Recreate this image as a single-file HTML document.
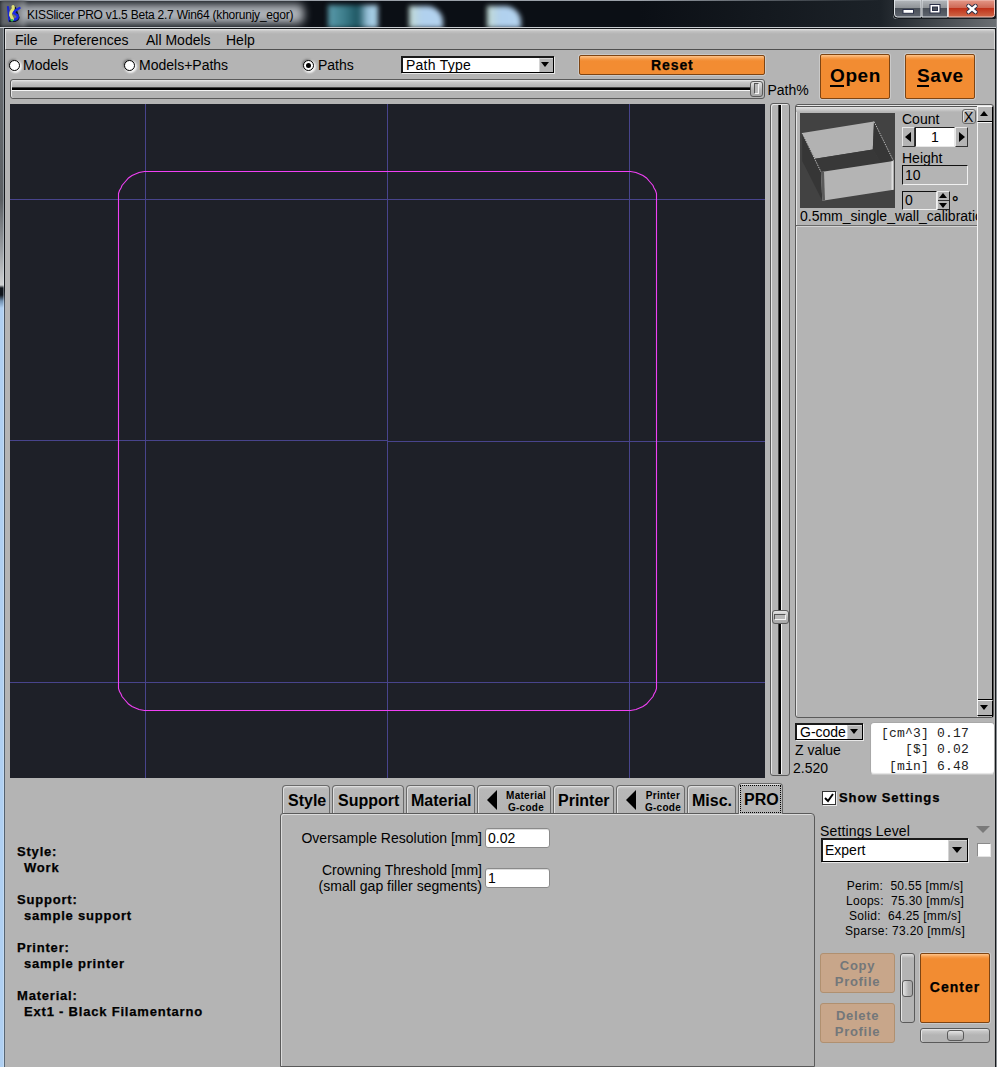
<!DOCTYPE html>
<html><head><meta charset="utf-8">
<style>
*{margin:0;padding:0;box-sizing:border-box}
html,body{width:997px;height:1067px;overflow:hidden;background:#b4b4b4;font-family:"Liberation Sans",sans-serif;color:#000}
.a{position:absolute}
.t{position:absolute;white-space:pre;line-height:1;font-size:14px}
.b{font-weight:bold}
.orange{position:absolute;background:linear-gradient(#ffc48a 0,#f59a48 3px,#f28c32 5px,#f28c32 100%);border:1px solid #7e4412;border-radius:2px;box-shadow:0 0 0 1px rgba(215,215,215,.6)}
.sld{position:absolute;border:1px solid #5a5a5a;border-radius:3px;background:linear-gradient(#e8e8e8 0,#c8c8c8 2px,#b4b4b4 6px,#b4b4b4 100%);box-shadow:inset 1px 0 0 #e6e6e6}
.dd{position:absolute;background:#fff;border:1px solid #000;border-width:2px 1px 1px 2px;border-color:#1a1a1a #000 #000 #1a1a1a;box-shadow:1px 1px 0 #e8e8e8}
.ddb{position:absolute;top:0;bottom:0;right:0;background:#b4b4b4;border-top:1px solid #d8d8d8;border-left:1px solid #d8d8d8}
.tri{position:absolute;width:0;height:0;border-left:5px solid transparent;border-right:5px solid transparent;border-top:5px solid #000}
.radio{position:absolute;width:11px;height:11px;border-radius:50%;background:#fff;border:1.5px solid #000;box-shadow:-1px -1px 2px rgba(40,40,40,.45),1px 1px 2px 1px rgba(255,255,255,.9)}
.tab{position:absolute;top:785px;height:28px;border:1px solid #6a6a6a;border-bottom:none;border-radius:4px 4px 0 0;background:linear-gradient(#d0d0d0 0,#b8b8b8 3px,#b4b4b4 100%);box-shadow:inset 1px 1px 0 #dedede}
</style></head>
<body>
<!-- TITLE BAR -->
<div class="a" style="left:0;top:0;width:997px;height:28px;background:#0b0f15"></div>
<div class="a" style="left:0;top:0;width:997px;height:1px;background:#9aa0a8"></div>
<div class="a" style="left:0;top:0;width:26px;height:27px;background:#62666a;filter:blur(2px)"></div>
<div class="a" style="left:20px;top:4px;width:284px;height:20px;background:rgba(200,205,210,.85);filter:blur(4px);border-radius:6px"></div>
<div class="a" style="left:328px;top:5px;width:50px;height:23px;background:linear-gradient(90deg,#5c9cac,#3a7a88 35%,#1c5460 60%,#9ec6de 80%,#a8d0e8);filter:blur(2.5px)"></div>
<div class="a" style="left:409px;top:6px;width:34px;height:22px;background:linear-gradient(90deg,#c4dcd4,#b0d0ee 40%,#b4d4f0);filter:blur(2.5px);border-radius:0 16px 0 0"></div>
<div class="a" style="left:487px;top:6px;width:34px;height:22px;background:linear-gradient(90deg,#c4dcd4,#b0d0ee 40%,#b4d4f0);filter:blur(2.5px);border-radius:0 16px 0 0"></div>
<div class="a" style="left:640px;top:0;width:240px;height:28px;background:linear-gradient(90deg,rgba(11,15,21,0),rgba(28,34,40,1))"></div>
<div class="t" style="left:27px;top:8.5px;font-size:12px;letter-spacing:-0.23px;color:#000">KISSlicer PRO v1.5 Beta 2.7 Win64 (khorunjy_egor)</div>
<!-- app icon -->
<svg class="a" style="left:0;top:0;filter:blur(.35px)" width="26" height="26" viewBox="0 0 26 26">
<path d="M8 7 L9.5 21" stroke="#1a26d0" stroke-width="2.2" fill="none" stroke-linecap="round"/>
<path d="M15 8 L18.5 17.5 Q18 20 15 21 L10 21" stroke="#05101a" stroke-width="2.2" fill="none" stroke-linecap="round" opacity=".9"/>
<path d="M19.5 8 Q16 10 13 12.5 L17.5 15.5 Q18.5 18.5 15 19.5 L12 20" stroke="#1e2ae6" stroke-width="2.4" fill="none" stroke-linecap="round"/>
<path d="M13 6.5 Q14 8.5 12 10.5 Q10 13 10.5 15 Q11.5 17 12.5 19" stroke="#e2e274" stroke-width="3" fill="none" stroke-linecap="round"/>
<circle cx="12" cy="20.2" r="1.3" fill="#38c048"/>
</svg>

<!-- caption buttons -->
<svg class="a" style="left:880px;top:0" width="117" height="28" viewBox="0 0 117 28">
<defs>
<linearGradient id="gmin" x1="0" y1="0" x2="0" y2="1">
<stop offset="0" stop-color="#b4b8bc"/><stop offset=".5" stop-color="#8c9094"/><stop offset=".5" stop-color="#4a5058"/><stop offset="1" stop-color="#5e646e"/></linearGradient>
<linearGradient id="gcl" x1="0" y1="0" x2="0" y2="1">
<stop offset="0" stop-color="#e49888"/><stop offset=".5" stop-color="#cc6450"/><stop offset=".5" stop-color="#c0321a"/><stop offset="1" stop-color="#d06848"/></linearGradient>
<linearGradient id="gtb" x1="0" y1="0" x2="1" y2="0">
<stop offset="0" stop-color="#1c2228"/><stop offset="1" stop-color="#6c7074"/></linearGradient>
</defs>
<rect x="0" y="0" width="117" height="28" fill="url(#gtb)"/>
<path d="M13 0 V15 Q13 19 17 19 H116 V0 Z" fill="#e8ecf0" opacity=".85"/>
<path d="M13.5 0 V14.5 Q13.5 18.5 17.5 18.5 H115.5 V0" fill="#15191d" stroke="#15191d"/>
<path d="M14.5 0 V14 Q14.5 17 17.5 17 H41 V0 Z" fill="url(#gmin)" stroke="#e0e4e8" stroke-width="1"/>
<path d="M42 0 V17 H67.5 V0 Z" fill="url(#gmin)" stroke="#e0e4e8" stroke-width="1"/>
<path d="M68.5 0 V17 H112 Q114.5 17 114.5 14.5 V0 Z" fill="url(#gcl)" stroke="#f2c8c0" stroke-width="1"/>
<rect x="23" y="9.5" width="10.5" height="3.8" fill="#fff" stroke="#2a3048" stroke-width="1"/>
<rect x="50" y="4.5" width="10" height="8.5" fill="#fff" stroke="#2a3048" stroke-width="1"/>
<rect x="52.5" y="7" width="5" height="3.5" fill="#4a5058" stroke="#2a3048" stroke-width="1"/>
<path d="M88.5 6 L95.5 12 M95.5 6 L88.5 12" stroke="#2a3048" stroke-width="4.4" stroke-linecap="round"/>
<path d="M88.5 6 L95.5 12 M95.5 6 L88.5 12" stroke="#fff" stroke-width="2.4" stroke-linecap="square"/>
</svg>

<!-- window frame -->
<div class="a" style="left:0;top:28px;width:4px;height:1039px;background:linear-gradient(#6a6e72 0,#5c6064 172px,#9a9ea2 222px,#cfd1d2 257px,#10151b 260px,#10151b 267px,#7090b0 273px,#b0d0f2 280px,#b0d0f2 100%)"></div>
<div class="a" style="left:3px;top:27px;width:1px;height:1040px;background:rgba(230,240,250,.35)"></div>
<div class="a" style="left:0;top:27px;width:997px;height:1px;background:#c8ccd0"></div>
<div class="a" style="left:4px;top:28px;width:992px;height:1px;background:#15181b"></div>
<div class="a" style="left:4px;top:28px;width:1px;height:1039px;background:linear-gradient(#15181c 0,#15181c 262px,#4a5664 275px,#5a6876 100%)"></div>
<div class="a" style="left:995px;top:28px;width:1px;height:1039px;background:#15181b"></div>
<div class="a" style="left:996px;top:19px;width:1px;height:1048px;background:#8a8e92"></div>

<!-- MENU BAR -->
<div class="a" style="left:5px;top:29px;width:990px;height:21px;background:linear-gradient(#e6e6e6 0,#c4c4c4 2px,#b4b4b4 5px,#b4b4b4 100%);border-bottom:1px solid #505050;border-left:1px solid #e0e0e0;border-right:1px solid #d8d8d8;border-radius:0 2px 0 0"></div>
<div class="t" style="left:15px;top:32.5px">File</div>
<div class="t" style="left:53px;top:32.5px">Preferences</div>
<div class="t" style="left:146px;top:32.5px">All Models</div>
<div class="t" style="left:226px;top:32.5px">Help</div>


<!-- RADIO ROW -->
<div class="radio" style="left:9px;top:60px"></div>
<div class="t" style="left:23px;top:58px">Models</div>
<div class="radio" style="left:124px;top:60px"></div>
<div class="t" style="left:139px;top:58px">Models+Paths</div>
<div class="radio" style="left:303px;top:60px"></div>
<div class="a" style="left:306px;top:63px;width:5px;height:5px;border-radius:50%;background:#000"></div>
<div class="t" style="left:318px;top:58px">Paths</div>
<!-- Path Type dropdown -->
<div class="dd" style="left:401px;top:56px;width:153px;height:17px"></div>
<div class="a" style="left:539px;top:58px;width:14px;height:14px;background:#b4b4b4;border-top:1px solid #d4d4d4;border-left:1px solid #d4d4d4"></div>
<div class="tri" style="left:541px;top:62px;border-width:5px 4.5px 0 4.5px"></div>
<div class="t" style="left:406px;top:58px;font-size:14px;letter-spacing:.25px">Path Type</div>
<!-- Reset -->
<div class="orange" style="left:579px;top:55px;width:186px;height:20px"></div>
<div class="t b" style="left:651px;top:58px;font-size:14px;letter-spacing:.9px;-webkit-text-stroke:.25px #000">Reset</div>
<!-- Open / Save -->
<div class="orange" style="left:820px;top:54px;width:70px;height:45px"></div>
<div class="t b" style="left:830px;top:66px;font-size:19px;letter-spacing:.6px">Open</div>
<div class="a" style="left:830px;top:85px;width:14px;height:2px;background:#000"></div>
<div class="orange" style="left:905px;top:54px;width:70px;height:45px"></div>
<div class="t b" style="left:917px;top:66px;font-size:19px;letter-spacing:.6px">Save</div>
<div class="a" style="left:917px;top:85px;width:12px;height:2px;background:#000"></div>
<!-- horizontal path slider -->
<div class="sld" style="left:10px;top:79px;width:755px;height:20px"></div>
<div class="a" style="left:12px;top:87px;width:740px;height:3px;background:#000;border-top:1px solid #444"></div>
<div class="a" style="left:12px;top:90px;width:740px;height:1px;background:#f4f4f4"></div>
<div class="a" style="left:750px;top:81px;width:13px;height:16px;border:1px solid #5a5a5a;border-radius:3px;background:linear-gradient(#e4e4e4,#b4b4b4 60%,#a8a8a8)"></div>
<div class="a" style="left:754px;top:83px;width:5px;height:11px;border:1px solid #555;border-right-color:#f4f4f4;border-bottom-color:#f4f4f4;background:#b8b8b8"></div>
<div class="t" style="left:767.5px;top:83px">Path%</div>


<!-- VIEWPORT -->
<svg class="a" style="left:10px;top:104px" width="755" height="674" viewBox="0 0 755 674">
<rect width="755" height="674" fill="#1e2028"/>
<g stroke="#48448c" stroke-width="1" shape-rendering="crispEdges">
<line x1="135.5" y1="0" x2="135.5" y2="674"/>
<line x1="377.5" y1="0" x2="377.5" y2="674"/>
<line x1="619.5" y1="0" x2="619.5" y2="674"/>
<line x1="0" y1="95.5" x2="755" y2="95.5"/>
<line x1="0" y1="336.5" x2="377" y2="336.5"/>
<line x1="377" y1="337.5" x2="755" y2="337.5"/>
<line x1="0" y1="578.5" x2="755" y2="578.5"/>
</g>
<path d="M108.5 89.5 L109.5 86.5 L111 84 L112 81.5 L115 78 L118.5 74 L122 71.5 L125.5 70 L129 68.5 L134.5 67.5 L620.5 67.5 L626 68.5 L629.5 70 L633 71.5 L636.5 74 L640 78 L643 81.5 L644 84 L645.5 86.5 L646.5 89.5 L646.5 584.5 L645.5 587.5 L644 590 L643 592.5 L640 596 L636.5 600 L633 602.5 L629.5 604 L626 605.5 L620.5 606.5 L134.5 606.5 L129 605.5 L125.5 604 L122 602.5 L118.5 600 L115 596 L112 592.5 L111 590 L109.5 587.5 L108.5 584.5 Z" fill="none" stroke="#f040f4" stroke-width="1.1"/>
</svg>
<!-- vertical slider -->
<div class="a" style="left:770px;top:103px;width:20px;height:673px;border:1px solid #5a5a5a;border-radius:3px;background:#b4b4b4;box-shadow:inset 1px 1px 0 #e6e6e6"></div>
<div class="a" style="left:778px;top:105px;width:3px;height:669px;background:#000;border-left:1px solid #444"></div>
<div class="a" style="left:781px;top:105px;width:1px;height:669px;background:#f4f4f4"></div>
<div class="a" style="left:772px;top:610px;width:17px;height:14px;border:1px solid #5a5a5a;border-radius:3px;background:linear-gradient(#e4e4e4,#b4b4b4 60%,#a8a8a8)"></div>
<div class="a" style="left:774px;top:614px;width:12px;height:6px;border:1px solid #555;border-right-color:#f4f4f4;border-bottom-color:#f4f4f4;background:#b8b8b8"></div>

<!-- RIGHT PANEL -->
<div class="a" style="left:795px;top:104px;width:199px;height:614px;border:1px solid #5a5a5a;border-radius:3px;background:#b4b4b4;box-shadow:inset 1px 1px 0 #e6e6e6"></div>
<div class="a" style="left:796px;top:106px;width:181px;height:1px;background:#555"></div>
<div class="a" style="left:796px;top:107px;width:181px;height:5px;background:linear-gradient(#e4e4e4,#b4b4b4)"></div>
<div class="a" style="left:796px;top:225px;width:181px;height:1px;background:#6a6a6a"></div>
<div class="a" style="left:796px;top:226px;width:181px;height:1px;background:#d4d4d4"></div>
<!-- thumbnail -->
<svg class="a" style="left:800px;top:113px" width="95" height="95" viewBox="0 0 95 95">
<rect width="95" height="95" fill="#424242"/>
<polygon points="2.2,20.1 21,59 22.3,87.7 2.2,48" fill="#363636"/>
<polygon points="2.2,20.1 74,8.5 72.8,36.5 15,45.7" fill="#b2b2b2"/>
<polygon points="74,8.5 93.5,48 81.5,50.5 72.8,36.5" fill="#363636"/>
<polygon points="15,45.7 72.8,36.5 81.5,50.5 21,59" fill="#383838"/>
<polygon points="21,59 93.5,48 93.5,76.7 22.3,87.7" fill="#b4b4b4"/>
<polygon points="21,59 24,59 25,87.3 22.3,87.7" fill="#5a5a5a"/>
<line x1="74" y1="8.5" x2="93.5" y2="48" stroke="#d8d8d8" stroke-width=".8" stroke-dasharray="1.5 1"/>
<line x1="2.2" y1="20.1" x2="21" y2="59" stroke="#d8d8d8" stroke-width=".8" stroke-dasharray="1.5 1"/>
<polygon points="91.5,48.3 93.5,48 93.5,76.7 91.5,77" fill="#e0e0e0"/>
</svg>
<div class="t" style="left:800px;top:207px;width:177px;height:18px;line-height:18px;overflow:hidden;font-size:14px">0.5mm_single_wall_calibration</div>
<div class="t" style="left:902px;top:112px;font-size:14px">Count</div>
<div class="a" style="left:962px;top:109px;width:14px;height:15px;border:1px solid #6a6a6a;border-radius:3px;background:#b4b4b4;box-shadow:inset 1px 1px 0 #e0e0e0"></div>
<div class="t" style="left:964px;top:110px;font-size:14px">X</div>
<!-- count spinner -->
<div class="a" style="left:902px;top:127px;width:13px;height:20px;background:#b4b4b4;border:1px solid;border-color:#e8e8e8 #333 #333 #e8e8e8"></div>
<div class="a" style="left:905px;top:132px;width:0;height:0;border-top:5px solid transparent;border-bottom:5px solid transparent;border-right:6px solid #000"></div>
<div class="a" style="left:915px;top:127px;width:40px;height:20px;background:#fff;border:1px solid;border-color:#222 #e8e8e8 #e8e8e8 #222"></div>
<div class="t" style="left:931px;top:130px;font-size:14px">1</div>
<div class="a" style="left:955px;top:127px;width:13px;height:20px;background:#b4b4b4;border:1px solid;border-color:#e8e8e8 #333 #333 #e8e8e8"></div>
<div class="a" style="left:959px;top:132px;width:0;height:0;border-top:5px solid transparent;border-bottom:5px solid transparent;border-left:6px solid #000"></div>
<div class="t" style="left:902px;top:151px;font-size:14px">Height</div>
<div class="a" style="left:902px;top:165px;width:66px;height:20px;background:#b4b4b4;border:1px solid;border-color:#111 #f0f0f0 #f0f0f0 #111"></div>
<div class="t" style="left:905px;top:168px;font-size:14px">10</div>
<div class="a" style="left:902px;top:191px;width:35px;height:19px;background:#b4b4b4;border:1px solid;border-color:#111 #f0f0f0 #f0f0f0 #111"></div>
<div class="t" style="left:905px;top:193px;font-size:14px">0</div>
<div class="a" style="left:937px;top:191px;width:13px;height:19px;background:#b4b4b4;border:1px solid;border-color:#e8e8e8 #222 #222 #e8e8e8"></div>
<div class="a" style="left:938px;top:200px;width:11px;height:1px;background:#333"></div>
<div class="a" style="left:939px;top:193px;width:0;height:0;border-left:4.5px solid transparent;border-right:4.5px solid transparent;border-bottom:5px solid #000"></div>
<div class="a" style="left:939px;top:203px;width:0;height:0;border-left:4.5px solid transparent;border-right:4.5px solid transparent;border-top:5px solid #000"></div>
<div class="t b" style="left:952px;top:195px;font-size:16px">&#176;</div>
<!-- scrollbar -->
<div class="a" style="left:977px;top:106px;width:16px;height:611px;background:#b4b4b4;border-left:1px solid #f4f4f4;border-right:1px solid #000"></div>
<div class="a" style="left:977px;top:106px;width:16px;height:16px;background:#b4b4b4;border:1px solid;border-color:#f8f8f8 #000 #000 #f8f8f8"></div>
<div class="a" style="left:980px;top:111px;width:0;height:0;border-left:4.5px solid transparent;border-right:4.5px solid transparent;border-bottom:5px solid #000"></div>
<div class="a" style="left:978px;top:122px;width:14px;height:1px;background:#f4f4f4"></div>
<div class="a" style="left:978px;top:699px;width:14px;height:1px;background:#000"></div>
<div class="a" style="left:977px;top:700px;width:16px;height:16px;background:#b4b4b4;border:1px solid;border-color:#f8f8f8 #000 #000 #f8f8f8"></div>
<div class="a" style="left:980px;top:705px;width:0;height:0;border-left:4.5px solid transparent;border-right:4.5px solid transparent;border-top:5px solid #000"></div>

<!-- G-code dropdown etc -->
<div class="dd" style="left:795px;top:723px;width:68px;height:17px"></div>
<div class="a" style="left:847px;top:725px;width:15px;height:14px;background:#b4b4b4;border-top:1px solid #d4d4d4;border-left:1px solid #d4d4d4"></div>
<div class="tri" style="left:850px;top:729px;border-width:5px 4.5px 0 4.5px"></div>
<div class="t" style="left:800px;top:725px;font-size:14px;width:48px;overflow:hidden">G-code</div>
<div class="t" style="left:795px;top:743px;font-size:14px">Z value</div>
<div class="t" style="left:793px;top:761px;font-size:14px">2.520</div>
<div class="a" style="left:870px;top:722px;width:125px;height:53px;background:#fff;border:1px solid #a8a8a8;border-bottom-color:#c8c8c8;border-radius:4px;box-shadow:inset 0 -1px 1px #e4e4e4"></div>
<div class="t" style="left:867px;top:725.5px;width:102px;text-align:right;font-family:'Liberation Mono',monospace;font-size:13px;line-height:16.5px;letter-spacing:.2px;color:#222">[cm^3] 0.17
[$] 0.02
[min] 6.48</div>


<!-- TABS -->
<div class="a" style="left:280px;top:813px;width:535px;height:254px;border:1px solid #5a5a5a;border-right-color:#5a5a5a;border-radius:3px 4px 0 0;background:#b4b4b4;box-shadow:inset 1px 1px 0 #dcdcdc"></div>
<div class="tab" style="left:282px;width:48px"></div>
<div class="t b" style="left:288px;top:793px;font-size:16px">Style</div>
<div class="tab" style="left:332px;width:72px"></div>
<div class="t b" style="left:338px;top:793px;font-size:16px">Support</div>
<div class="tab" style="left:406px;width:69px"></div>
<div class="t b" style="left:411px;top:793px;font-size:16px">Material</div>
<div class="tab" style="left:477px;width:74px"></div>
<div class="a" style="left:487px;top:790px;width:0;height:0;border-top:10px solid transparent;border-bottom:10px solid transparent;border-right:10px solid #000"></div>
<div class="t b" style="left:506px;top:790.3px;font-size:10px;line-height:12px;letter-spacing:.3px;text-align:center;width:40px">Material
G-code</div>
<div class="tab" style="left:553px;width:61px"></div>
<div class="t b" style="left:558px;top:793px;font-size:16px">Printer</div>
<div class="tab" style="left:616px;width:69px"></div>
<div class="a" style="left:626px;top:790px;width:0;height:0;border-top:10px solid transparent;border-bottom:10px solid transparent;border-right:10px solid #000"></div>
<div class="t b" style="left:643px;top:790.3px;font-size:10px;line-height:12px;letter-spacing:.3px;text-align:center;width:40px">Printer
G-code</div>
<div class="tab" style="left:687px;width:49px"></div>
<div class="t b" style="left:692px;top:793px;font-size:16px">Misc.</div>
<div class="tab" style="left:738px;top:783px;width:45px;height:31px;background:#b4b4b4;box-shadow:inset 1px 1px 0 #dedede"></div>
<div class="a" style="left:740px;top:785px;width:41px;height:28px;border:1px dotted #000"></div>
<div class="t b" style="left:744px;top:792px;font-size:16px">PRO</div>

<!-- PRO content -->
<div class="t" style="left:301px;top:831px;width:181px;text-align:right;font-size:14px">Oversample Resolution [mm]</div>
<div class="a" style="left:485px;top:828px;width:65px;height:20px;background:#fff;border:1px solid #8a8a8a;border-radius:3px;box-shadow:inset 0 1px 0 #ddd"></div>
<div class="t" style="left:488px;top:831px;font-size:14px">0.02</div>
<div class="t" style="left:200px;top:863px;width:282px;text-align:right;font-size:14px;line-height:15.5px">Crowning Threshold [mm]
(small gap filler segments)</div>
<div class="a" style="left:485px;top:868px;width:65px;height:20px;background:#fff;border:1px solid #8a8a8a;border-radius:3px;box-shadow:inset 0 1px 0 #ddd"></div>
<div class="t" style="left:488px;top:871px;font-size:14px">1</div>

<!-- LEFT LABELS -->
<div class="t b" style="left:17px;top:844.5px;font-size:13px;letter-spacing:.8px;-webkit-text-stroke:.25px #000">Style:</div>
<div class="t b" style="left:24px;top:861px;font-size:13px;letter-spacing:.8px;-webkit-text-stroke:.25px #000">Work</div>
<div class="t b" style="left:17px;top:892.5px;font-size:13px;letter-spacing:.8px;-webkit-text-stroke:.25px #000">Support:</div>
<div class="t b" style="left:24px;top:909px;font-size:13px;letter-spacing:.8px;-webkit-text-stroke:.25px #000">sample support</div>
<div class="t b" style="left:17px;top:940.5px;font-size:13px;letter-spacing:.8px;-webkit-text-stroke:.25px #000">Printer:</div>
<div class="t b" style="left:24px;top:957px;font-size:13px;letter-spacing:.8px;-webkit-text-stroke:.25px #000">sample printer</div>
<div class="t b" style="left:17px;top:988.5px;font-size:13px;letter-spacing:.8px;-webkit-text-stroke:.25px #000">Material:</div>
<div class="t b" style="left:24px;top:1005px;font-size:13px;letter-spacing:.8px;-webkit-text-stroke:.25px #000">Ext1 - Black Filamentarno</div>

<!-- RIGHT BOTTOM -->
<div class="a" style="left:822px;top:791px;width:14px;height:14px;background:#fff;border:1px solid #333;box-shadow:1px 1px 0 #e8e8e8"></div>
<svg class="a" style="left:823px;top:792px" width="12" height="12" viewBox="0 0 12 12"><path d="M2 6 L5 9 L10 2" stroke="#000" stroke-width="2" fill="none"/></svg>
<div class="t b" style="left:839px;top:791px;font-size:13px;letter-spacing:.9px;-webkit-text-stroke:.25px #000">Show Settings</div>
<div class="t" style="left:820px;top:824px;font-size:14px;letter-spacing:.15px">Settings Level</div>
<div class="a" style="left:976px;top:826px;width:0;height:0;border-left:7px solid transparent;border-right:7px solid transparent;border-top:7px solid #7a7a7a"></div>
<div class="dd" style="left:821px;top:838px;width:147px;height:24px"></div>
<div class="a" style="left:948px;top:840px;width:19px;height:21px;background:#b4b4b4;border-top:1px solid #d4d4d4;border-left:1px solid #d4d4d4"></div>
<div class="tri" style="left:952px;top:847px;border-width:6px 5.7px 0 5.7px"></div>
<div class="t" style="left:825px;top:843px;font-size:14px">Expert</div>
<div class="a" style="left:977px;top:843px;width:14px;height:14px;background:#fff;border:1px solid;border-color:#8a8a8a #e4e4e4 #e4e4e4 #8a8a8a"></div>
<div class="t" style="left:820px;top:879px;width:170px;text-align:center;font-size:12px;line-height:15px;letter-spacing:.3px">Perim:  50.55 [mm/s]
Loops:  75.30 [mm/s]
Solid:  64.25 [mm/s]
Sparse: 73.20 [mm/s]</div>
<div class="a" style="left:820px;top:953px;width:75px;height:40px;background:#c8a68a;border:1px solid #b09070;border-radius:3px"></div>
<div class="t b" style="left:820px;top:958px;width:75px;text-align:center;font-size:13px;line-height:15.5px;letter-spacing:.7px;color:#73777a">Copy
Profile</div>
<div class="a" style="left:820px;top:1003px;width:75px;height:40px;background:#c8a68a;border:1px solid #b09070;border-radius:3px"></div>
<div class="t b" style="left:820px;top:1008px;width:75px;text-align:center;font-size:13px;line-height:15.5px;letter-spacing:.7px;color:#73777a">Delete
Profile</div>
<div class="sld" style="left:900px;top:953px;width:15px;height:70px;background:linear-gradient(#e0e0e0 0,#b4b4b4 4px);box-shadow:inset 1px 0 0 #e6e6e6"></div>
<div class="a" style="left:902px;top:980px;width:11px;height:17px;border:1px solid #5a5a5a;border-radius:3px;background:linear-gradient(90deg,#e4e4e4,#b4b4b4 60%,#a8a8a8)"></div>
<div class="orange" style="left:920px;top:953px;width:70px;height:70px"></div>
<div class="t b" style="left:920px;top:980px;width:70px;text-align:center;font-size:14px;letter-spacing:1px;-webkit-text-stroke:.25px #000">Center</div>
<div class="sld" style="left:920px;top:1028px;width:70px;height:15px"></div>
<div class="a" style="left:947px;top:1030px;width:17px;height:11px;border:1px solid #5a5a5a;border-radius:3px;background:linear-gradient(#e4e4e4,#b4b4b4 60%,#a8a8a8)"></div>

</body></html>
